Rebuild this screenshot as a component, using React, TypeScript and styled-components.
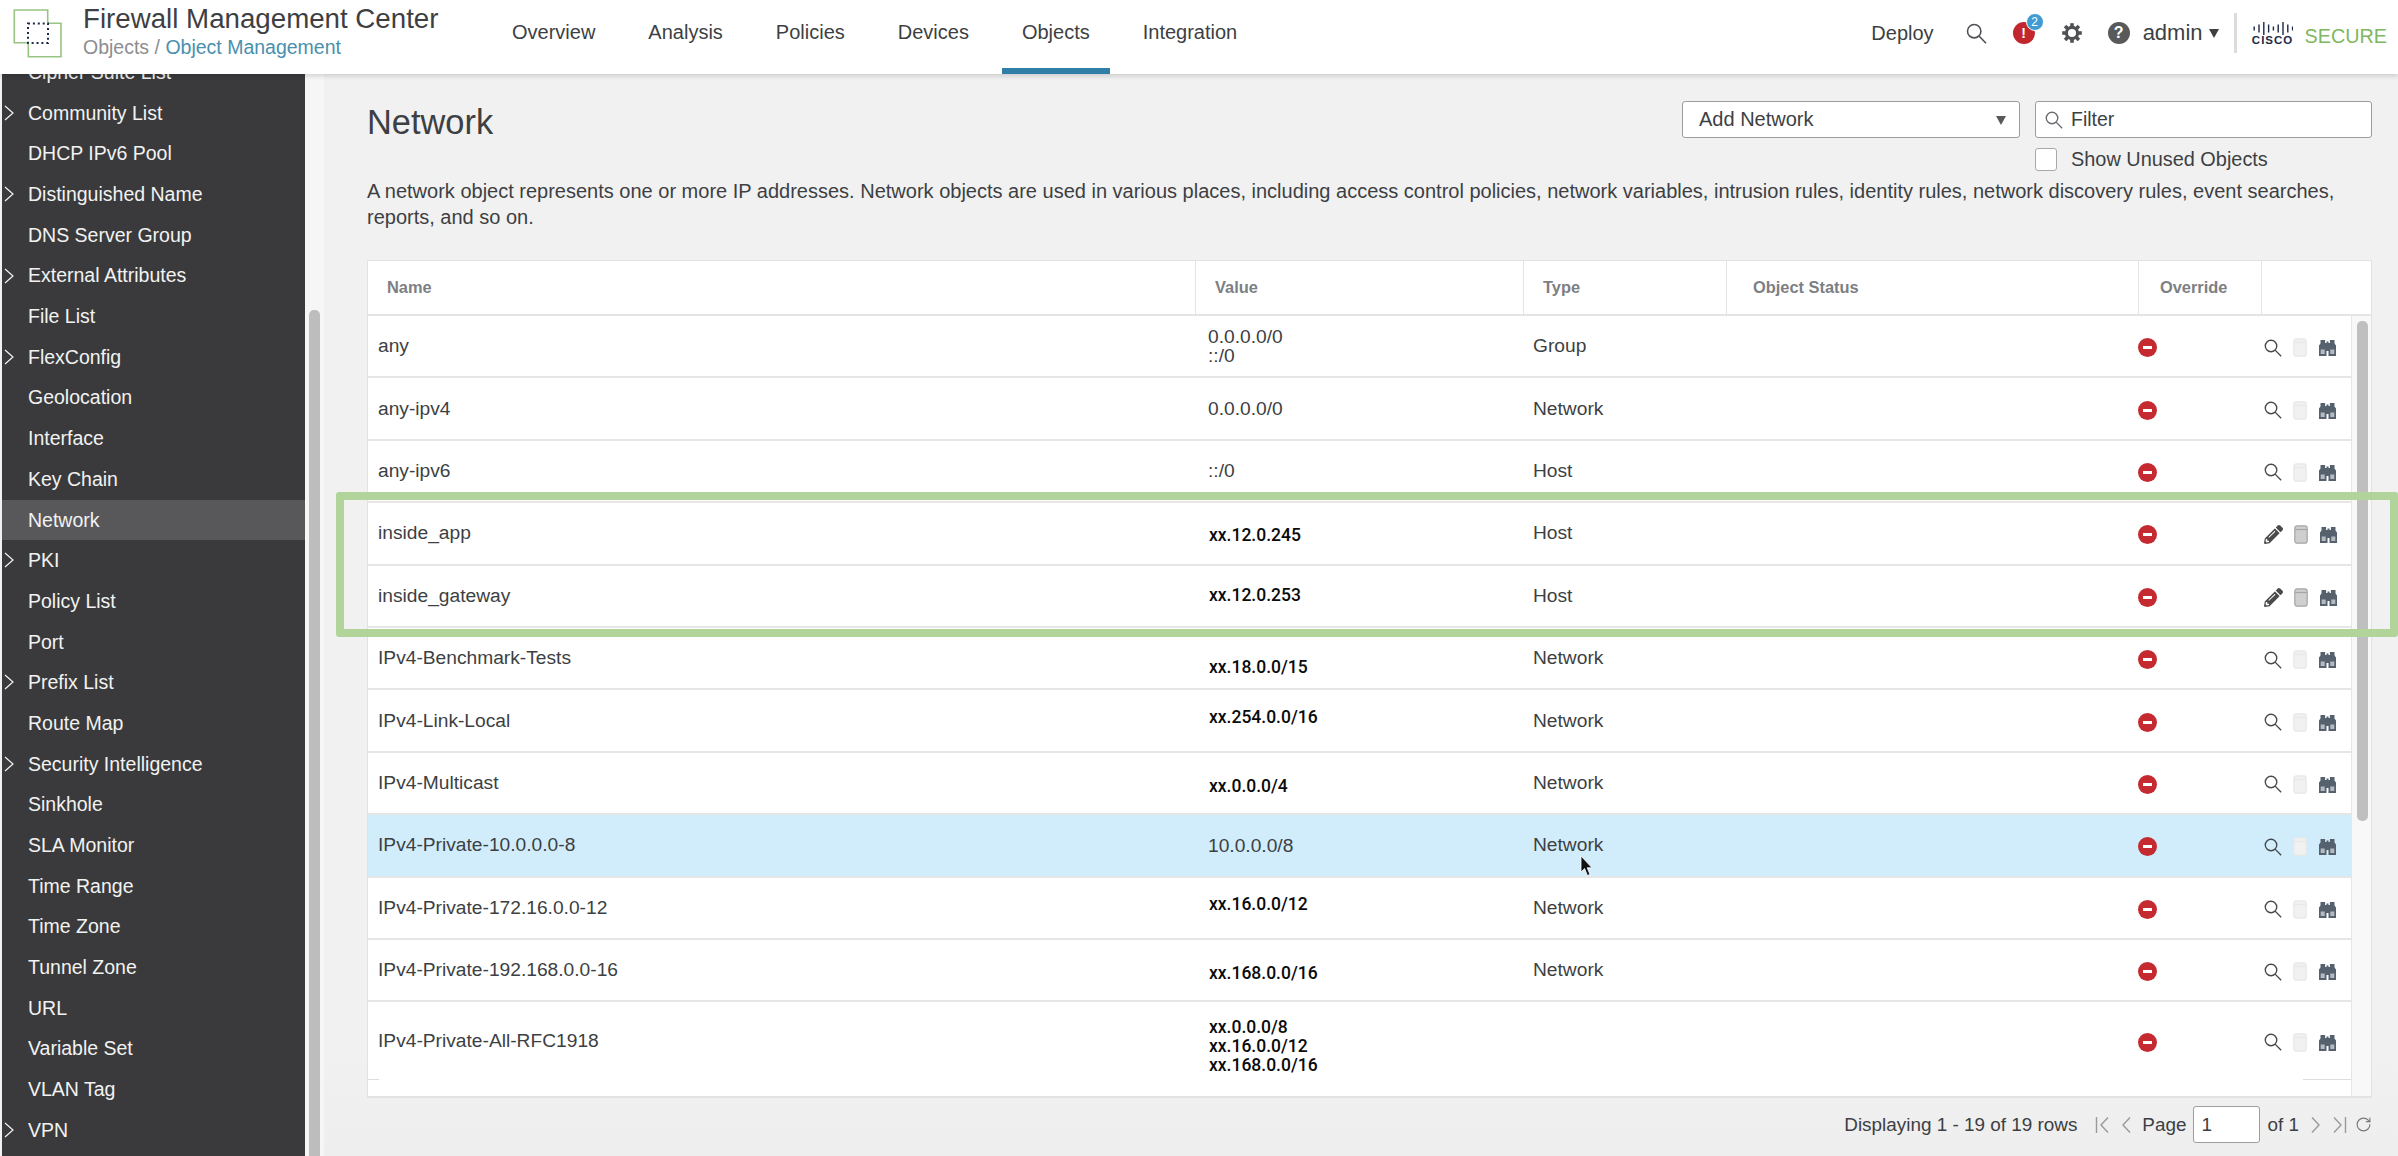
import * as React from "react";
import styled, { createGlobalStyle } from "styled-components";
import { FaPencilAlt } from "react-icons/fa";
import { RotateCw } from "lucide-react";

const GlobalStyle = createGlobalStyle`
  html, body, #root {
    margin: 0;
    height: 100%;
    overflow: hidden;
  }
  body {
    font-family: "Liberation Sans", Arial, sans-serif;
    color: #3d3f43;
    background: #f1f1f1;
  }
  * { box-sizing: border-box; }
`;

const columns = "828px 328px 203px 412px 123px 1fr";

const SLayout = styled.div`
  position: relative;
  width: 100%;
  height: 100vh;
  display: flex;
  flex-direction: column;
`;

const SHeader = styled.header`
  position: relative;
  z-index: 2;
  height: 74px;
  flex: none;
  display: flex;
  align-items: stretch;
  padding-left: 5px;
  background: #fff;
  box-shadow: 0 2px 5px rgba(0, 0, 0, 0.16);
`;

const SBrand = styled.div`
  width: 487px;
  flex: none;
  display: flex;
  align-items: flex-start;
  gap: 8px;
`;

const SBrandText = styled.div`
  padding-top: 1px;
  white-space: nowrap;
`;

const STitle = styled.div`
  font-size: 27.7px;
  line-height: 35px;
  color: #3d3f43;
`;

const SCrumbs = styled.div`
  font-size: 19.5px;
  line-height: 24px;
  margin-top: -1px;
  color: #8b8d90;
`;

const SCrumbLink = styled.span`
  color: #4a90ad;
`;

const SNav = styled.nav`
  display: flex;
  gap: 13px;
`;

const STab = styled.div<{ $active?: boolean }>`
  display: flex;
  align-items: flex-start;
  padding: 21px 20px 0;
  font-size: 20px;
  line-height: 23px;
  color: #3d3f43;
  border-bottom: 6px solid ${(p) => (p.$active ? "#2f7fa8" : "transparent")};
`;

const STools = styled.div`
  margin-left: auto;
  display: flex;
  align-items: center;
  padding-right: 11px;
  padding-bottom: 8px;
`;

const SDeploy = styled.span`
  font-size: 20px;
  margin-right: 32px;
`;

const SAlert = styled.div`
  position: relative;
  width: 22px;
  height: 22px;
  margin: 0 26px 0 26px;
  border-radius: 50%;
  background: #c2272d;
  color: #fff;
  font-size: 14px;
  font-weight: 700;
  line-height: 22px;
  text-align: center;
`;

const SAlertBadge = styled.span`
  position: absolute;
  top: -9px;
  right: -9px;
  width: 18px;
  height: 18px;
  border-radius: 50%;
  border: 1px solid #fff;
  background: #3f9bd2;
  color: #fff;
  font-size: 12px;
  font-weight: 400;
  line-height: 16px;
`;

const SHelp = styled.div`
  width: 22px;
  height: 22px;
  margin-left: 25px;
  border-radius: 50%;
  background: #58595b;
  color: #fff;
  font-size: 16px;
  font-weight: 700;
  line-height: 22px;
  text-align: center;
`;

const SAdmin = styled.span`
  margin-left: 13px;
  font-size: 22px;
`;

const SCaretDown = styled.svg`
  margin-left: 6px;
`;

const SDivider = styled.div`
  width: 3px;
  height: 40px;
  margin: 0 14px 0 15px;
  background: #dcdcdc;
`;

const SCisco = styled.div`
  width: 44px;
  display: flex;
  flex-direction: column;
  align-items: center;
  margin-top: 2px;
`;

const SCiscoWord = styled.span`
  font-size: 11.5px;
  line-height: 11px;
  font-weight: 700;
  letter-spacing: 1px;
  color: #1d2a44;
`;

const SSecure = styled.span`
  margin-left: 10px;
  margin-top: 6px;
  font-size: 19.8px;
  color: #7db85f;
`;

const SBody = styled.div`
  flex: 1;
  min-height: 0;
  display: flex;
`;

const SSidebar = styled.aside`
  width: 303px;
  margin-left: 2px;
  flex: none;
  overflow: hidden;
  background: #3a3a3c;
`;

const SSideList = styled.ul`
  list-style: none;
  margin: -21.9px 0 0;
  padding: 0;
`;

const SSideItem = styled.li<{ $active?: boolean }>`
  height: 40.7px;
  display: flex;
  align-items: center;
  padding-left: 26px;
  position: relative;
  font-size: 19.5px;
  color: #f2f2f2;
  background: ${(p) => (p.$active ? "#58585b" : "transparent")};
`;

const SSideChevron = styled.svg`
  position: absolute;
  left: 1px;
  top: 12px;
`;

const STrack = styled.div`
  width: 19px;
  flex: none;
  padding: 236px 4px 0;
  background: #f6f6f6;
`;

const SThumb = styled.div`
  height: 100%;
  background: #bdbdbd;
  border-radius: 5px 5px 0 0;
`;

const SMain = styled.main`
  flex: 1;
  min-width: 0;
  display: flex;
  flex-direction: column;
  padding: 0 26px 0 43px;
  background: linear-gradient(#f1f1f1 90%, #eeeeee);
`;

const SHead = styled.div`
  display: flex;
  justify-content: space-between;
  padding-top: 27px;
`;

const SPageTitle = styled.h1`
  margin: 0;
  font-size: 34.4px;
  font-weight: 400;
  line-height: 42px;
  color: #3d3f43;
`;

const SControls = styled.div`
  display: flex;
  gap: 15px;
`;

const SSelect = styled.div`
  position: relative;
  width: 338px;
  height: 37px;
  display: flex;
  align-items: center;
  padding-left: 16px;
  font-size: 20px;
  background: #fff;
  border: 1px solid #9d9d9d;
  border-radius: 3px;
`;

const SCaret = styled.span`
  position: absolute;
  right: 13px;
  top: 14px;
  width: 0;
  height: 0;
  border-left: 5.5px solid transparent;
  border-right: 5.5px solid transparent;
  border-top: 9px solid #58595b;
`;

const SFilterColumn = styled.div`
  width: 337px;
`;

const SFilter = styled.div`
  height: 37px;
  display: flex;
  align-items: center;
  gap: 8px;
  padding-left: 9px;
  font-size: 19.5px;
  background: #fff;
  border: 1px solid #9d9d9d;
  border-radius: 3px;
`;

const SCheckRow = styled.label`
  display: flex;
  align-items: center;
  gap: 14px;
  margin-top: 10px;
  font-size: 19.9px;
`;

const SCheckBox = styled.span`
  width: 22px;
  height: 23px;
  background: #fff;
  border: 1px solid #a9a9a9;
  border-radius: 3px;
`;

const SDescription = styled.p`
  margin: 7px 0 0;
  font-size: 20px;
  line-height: 26px;
  color: #3d3f43;
`;

const STable = styled.section`
  flex: 1;
  min-height: 0;
  margin-top: 30px;
  display: flex;
  flex-direction: column;
  background: #fff;
  border: 1px solid #e2e2e2;
  border-width: 1px 1px 2px 1px;
`;

const STableHead = styled.div`
  height: 55px;
  flex: none;
  display: grid;
  grid-template-columns: ${columns};
  border-bottom: 2px solid #e4e4e4;
`;

const SHeadCell = styled.div<{ $pad: number }>`
  display: flex;
  align-items: center;
  padding-left: ${(p) => p.$pad}px;
  font-size: 16.4px;
  font-weight: 700;
  color: #7d7f83;
  border-right: 1px solid #e4e4e4;
  &:last-child { border-right: none; }
`;

const STableBody = styled.div`
  flex: 1;
  min-height: 0;
  display: flex;
  overflow: hidden;
`;

const SRows = styled.div`
  flex: 1;
  min-width: 0;
`;

const SRow = styled.div<{ $hover?: boolean; $tall?: boolean }>`
  height: ${(p) => (p.$tall ? "77px" : "62.4px")};
  display: grid;
  grid-template-columns: ${columns};
  align-items: center;
  font-size: 19.2px;
  color: #3d3f43;
  background: ${(p) => (p.$hover ? "#d1edfb" : "#fff")};
  border-bottom: ${(p) => (p.$tall ? "none" : "2px solid #e6e6e6")};
`;

const SNameCell = styled.div`
  padding-left: 10px;
`;

const SValueCell = styled.div`
  padding-left: 12px;
  line-height: 19px;
`;

const SMasked = styled.div<{ $nudge?: number }>`
  padding-left: 1px;
  margin-top: ${(p) => (p.$nudge ?? 0) * 2}px;
  font-family: Roboto, "Liberation Sans", sans-serif;
  font-weight: 500;
  font-size: 17.5px;
  color: #0b0b0b;
`;

const STypeCell = styled.div`
  padding-left: 9px;
`;

const SOverrideCell = styled.div`
  display: flex;
  margin-left: -1px;
  padding-top: 3px;
`;

const SNoEntry = styled.span`
  position: relative;
  width: 19px;
  height: 19px;
  border-radius: 50%;
  background: #c42a30;
  &::after {
    content: "";
    position: absolute;
    left: 5px;
    right: 5px;
    top: 8px;
    height: 3px;
    background: #fff;
  }
`;

const SActions = styled.div`
  display: flex;
  align-items: center;
  gap: 11px;
  padding-left: 2px;
  padding-top: 3px;
`;

const SRowRule = styled.div`
  display: flex;
  justify-content: space-between;
`;

const SRuleSegment = styled.div<{ $width: number }>`
  width: ${(p) => p.$width}px;
  height: 1px;
  background: #dddddd;
`;

const SGutter = styled.div`
  width: 20px;
  flex: none;
  padding: 5px 3px 0 5px;
  background: #f8f8f8;
  border-left: 1px solid #e6e6e6;
`;

const SGutterThumb = styled.div`
  height: 500px;
  border-radius: 5px;
  background: #bfbfbf;
`;

const SFooter = styled.footer`
  height: 58px;
  flex: none;
  display: flex;
  justify-content: flex-end;
  align-items: flex-start;
  padding-top: 8px;
  font-size: 18.9px;
`;

const SFooterItem = styled.div`
  height: 37px;
  display: flex;
  align-items: center;
`;

const SPagerStart = styled(SFooterItem)`
  margin-left: 6px;
  margin-right: 11px;
`;

const SPager = styled.svg`
  margin-left: 12px;
`;

const SPageInput = styled.div`
  width: 67px;
  height: 37px;
  margin: 0 7px;
  padding-left: 7px;
  display: flex;
  align-items: center;
  background: #fff;
  border: 1px solid #9d9d9d;
  border-radius: 3px;
`;

const SRefresh = styled(RotateCw)`
  margin-left: 8px;
`;

const SFocusBox = styled.div`
  position: absolute;
  left: 336px;
  top: 492px;
  width: 2062px;
  height: 145px;
  border: 8px solid #b1d49b;
  border-radius: 3px;
  pointer-events: none;
`;

const SPointer = styled.svg`
  position: absolute;
  left: 1580px;
  top: 855px;
`;

const Logo = () => (
  <svg width="70" height="70" viewBox="0 0 70 70">
    <path d="M9.3 10H42.7V23.3H56V56.7H23.3V42.7H9.3Z" fill="none" stroke="#98c583" strokeWidth="1.6" />
    <rect x="23" y="23.5" width="20" height="19.5" fill="none" stroke="#1f2a4a" strokeWidth="2" strokeDasharray="2 2.9" />
  </svg>
);

const Search = ({ size = 21, color = "#4f5154" }: { size?: number; color?: string }) => (
  <svg width={size} height={size} viewBox="0 0 21 21" fill="none" stroke={color} strokeWidth="1.6">
    <circle cx="8.2" cy="8.2" r="6.7" />
    <path d="M13 13L20 20.2" />
  </svg>
);

const Gear = () => (
  <svg width="22" height="22" viewBox="0 0 22 22" fill="none" stroke="#4f5154">
    <circle cx="11" cy="11" r="5.6" strokeWidth="3.2" />
    {[0, 45, 90, 135, 180, 225, 270, 315].map((a) => (
      <path key={a} d="M11 1.2V5" strokeWidth="3.6" transform={`rotate(${a} 11 11)`} />
    ))}
  </svg>
);

const CiscoBars = () => (
  <svg width="40" height="13" viewBox="0 0 40 13" fill="#1d2a44">
    {[4, 8, 13, 8, 4, 8, 13, 8, 4].map((h, i) => (
      <rect key={i} x={i * 4.8 + 0.5} y={(13 - h) / 2} width="1.4" height={h} />
    ))}
  </svg>
);

const Chevron = () => (
  <SSideChevron width="12" height="16" viewBox="0 0 12 16" fill="none" stroke="#f2f2f2" strokeWidth="1.2">
    <path d="M2 1L10 8L2 15" />
  </SSideChevron>
);

const Trash = ({ on }: { on?: boolean }) => (
  <svg width="14" height="19" viewBox="0 0 14 19" fill={on ? "#cfcfcf" : "#f1f1f1"} stroke={on ? "#a6a6a6" : "#e8e8e8"} strokeWidth="1.2">
    <rect x="0.8" y="0.8" width="12.4" height="17.4" rx="2.5" />
    <path d="M1 4.5H13" fill="none" />
  </svg>
);

const Binoculars = () => (
  <svg width="19" height="17" viewBox="0 0 19 17">
    <path fill="#56616e" d="M2.5 1h4.6v3h1.4V2.5h2V4h1.4V1h4.6v3.4l1.5 2V17h-7.5v-5H8.5v5H1V6.4l1.5-2z" />
    <rect x="2.7" y="10.5" width="4" height="4.5" fill="#b4bac1" />
    <rect x="12.3" y="10.5" width="4" height="4.5" fill="#b4bac1" />
  </svg>
);

const Pager = ({ d, width = 14 }: { d: string; width?: number }) => (
  <SPager width={width} height="18" viewBox={`0 0 ${width} 18`} fill="none" stroke="#9a9a9a" strokeWidth="1.4">
    <path d={d} />
  </SPager>
);

const sideItems: [string, boolean][] = [
  ["Cipher Suite List", false],
  ["Community List", true],
  ["DHCP IPv6 Pool", false],
  ["Distinguished Name", true],
  ["DNS Server Group", false],
  ["External Attributes", true],
  ["File List", false],
  ["FlexConfig", true],
  ["Geolocation", false],
  ["Interface", false],
  ["Key Chain", false],
  ["Network", false],
  ["PKI", true],
  ["Policy List", false],
  ["Port", false],
  ["Prefix List", true],
  ["Route Map", false],
  ["Security Intelligence", true],
  ["Sinkhole", false],
  ["SLA Monitor", false],
  ["Time Range", false],
  ["Time Zone", false],
  ["Tunnel Zone", false],
  ["URL", false],
  ["Variable Set", false],
  ["VLAN Tag", false],
  ["VPN", true],
];

const headCells: [string, number][] = [
  ["Name", 19],
  ["Value", 19],
  ["Type", 19],
  ["Object Status", 26],
  ["Override", 21],
  ["", 0],
];

type Row = {
  name: string;
  values: string[];
  masked?: boolean;
  nudge?: number;
  type?: string;
  editable?: boolean;
  hover?: boolean;
  tall?: boolean;
};

const rows: Row[] = [
  { name: "any", values: ["0.0.0.0/0", "::/0"], type: "Group" },
  { name: "any-ipv4", values: ["0.0.0.0/0"], type: "Network" },
  { name: "any-ipv6", values: ["::/0"], type: "Host" },
  { name: "inside_app", values: ["xx.12.0.245"], masked: true, nudge: 2, type: "Host", editable: true },
  { name: "inside_gateway", values: ["xx.12.0.253"], masked: true, type: "Host", editable: true },
  { name: "IPv4-Benchmark-Tests", values: ["xx.18.0.0/15"], masked: true, nudge: 9, type: "Network" },
  { name: "IPv4-Link-Local", values: ["xx.254.0.0/16"], masked: true, nudge: -3, type: "Network" },
  { name: "IPv4-Multicast", values: ["xx.0.0.0/4"], masked: true, nudge: 4, type: "Network" },
  { name: "IPv4-Private-10.0.0.0-8", values: ["10.0.0.0/8"], type: "Network", hover: true },
  { name: "IPv4-Private-172.16.0.0-12", values: ["xx.16.0.0/12"], masked: true, nudge: -3, type: "Network" },
  { name: "IPv4-Private-192.168.0.0-16", values: ["xx.168.0.0/16"], masked: true, nudge: 3, type: "Network" },
  { name: "IPv4-Private-All-RFC1918", values: ["xx.0.0.0/8", "xx.16.0.0/12", "xx.168.0.0/16"], masked: true, nudge: 6, tall: true },
];

const App = () => (
  <SLayout>
    <GlobalStyle />
    <SHeader>
      <SBrand>
        <Logo />
        <SBrandText>
          <STitle>Firewall Management Center</STitle>
          <SCrumbs>
            Objects / <SCrumbLink>Object Management</SCrumbLink>
          </SCrumbs>
        </SBrandText>
      </SBrand>
      <SNav>
        {["Overview", "Analysis", "Policies", "Devices", "Objects", "Integration"].map((t) => (
          <STab key={t} $active={t === "Objects"}>
            {t}
          </STab>
        ))}
      </SNav>
      <STools>
        <SDeploy>Deploy</SDeploy>
        <Search />
        <SAlert>
          !<SAlertBadge>2</SAlertBadge>
        </SAlert>
        <Gear />
        <SHelp>?</SHelp>
        <SAdmin>admin</SAdmin>
        <SCaretDown width="10" height="9" viewBox="0 0 10 9">
          <path d="M0 0H10L5 9Z" fill="#3d3f43" />
        </SCaretDown>
        <SDivider />
        <SCisco>
          <CiscoBars />
          <SCiscoWord>CISCO</SCiscoWord>
        </SCisco>
        <SSecure>SECURE</SSecure>
      </STools>
    </SHeader>
    <SBody>
      <SSidebar>
        <SSideList>
          {sideItems.map(([label, chevron]) => (
            <SSideItem key={label} $active={label === "Network"}>
              {chevron && <Chevron />}
              {label}
            </SSideItem>
          ))}
        </SSideList>
      </SSidebar>
      <STrack>
        <SThumb />
      </STrack>
      <SMain>
        <SHead>
          <SPageTitle>Network</SPageTitle>
          <SControls>
            <SSelect>
              Add Network
              <SCaret />
            </SSelect>
            <SFilterColumn>
              <SFilter>
                <Search size={18} color="#6a6c70" />
                Filter
              </SFilter>
              <SCheckRow>
                <SCheckBox />
                Show Unused Objects
              </SCheckRow>
            </SFilterColumn>
          </SControls>
        </SHead>
        <SDescription>
          A network object represents one or more IP addresses. Network objects are used in various places, including
          access control policies, network variables, intrusion rules, identity rules, network discovery rules, event
          searches, reports, and so on.
        </SDescription>
        <STable>
          <STableHead>
            {headCells.map(([h, pad]) => (
              <SHeadCell key={h} $pad={pad}>
                {h}
              </SHeadCell>
            ))}
          </STableHead>
          <STableBody>
            <SRows>
              {rows.map((r) => (
                <SRow key={r.name} $hover={r.hover} $tall={r.tall}>
                  <SNameCell>{r.name}</SNameCell>
                  <SValueCell>
                    {r.masked ? (
                      <SMasked $nudge={r.nudge}>
                        {r.values.map((v) => (
                          <div key={v}>{v}</div>
                        ))}
                      </SMasked>
                    ) : (
                      r.values.map((v) => <div key={v}>{v}</div>)
                    )}
                  </SValueCell>
                  <STypeCell>{r.type}</STypeCell>
                  <div />
                  <SOverrideCell>
                    <SNoEntry />
                  </SOverrideCell>
                  <SActions>
                    {r.editable ? (
                      <FaPencilAlt size={19} color="#4a4a4a" />
                    ) : (
                      <Search size={18} color="#47494c" />
                    )}
                    <Trash on={r.editable} />
                    <Binoculars />
                  </SActions>
                </SRow>
              ))}
              <SRowRule>
                <SRuleSegment $width={11} />
                <SRuleSegment $width={48} />
              </SRowRule>
            </SRows>
            <SGutter>
              <SGutterThumb />
            </SGutter>
          </STableBody>
        </STable>
        <SFooter>
          <SFooterItem>Displaying 1 - 19 of 19 rows</SFooterItem>
          <SPagerStart>
            <Pager d="M1.5 1V17M13 1.5L6 9L13 16.5" />
            <Pager d="M9 1.5L2 9L9 16.5" width={10} />
          </SPagerStart>
          <SFooterItem>Page</SFooterItem>
          <SPageInput>1</SPageInput>
          <SFooterItem>of 1</SFooterItem>
          <SFooterItem>
            <Pager d="M1 1.5L8 9L1 16.5" width={10} />
            <Pager d="M1 1.5L8 9L1 16.5M12.5 1V17" />
            <SRefresh size={17} color="#77797c" strokeWidth={1.6} />
          </SFooterItem>
        </SFooter>
      </SMain>
    </SBody>
    <SFocusBox />
    <SPointer width="14" height="24" viewBox="0 0 14 24">
      <path d="M1 1V17L4.6 13.6L7.4 20.5L10 19.4L7.2 12.8H12Z" fill="#111" stroke="#fff" strokeWidth="0.8" />
    </SPointer>
  </SLayout>
);

export default App;
